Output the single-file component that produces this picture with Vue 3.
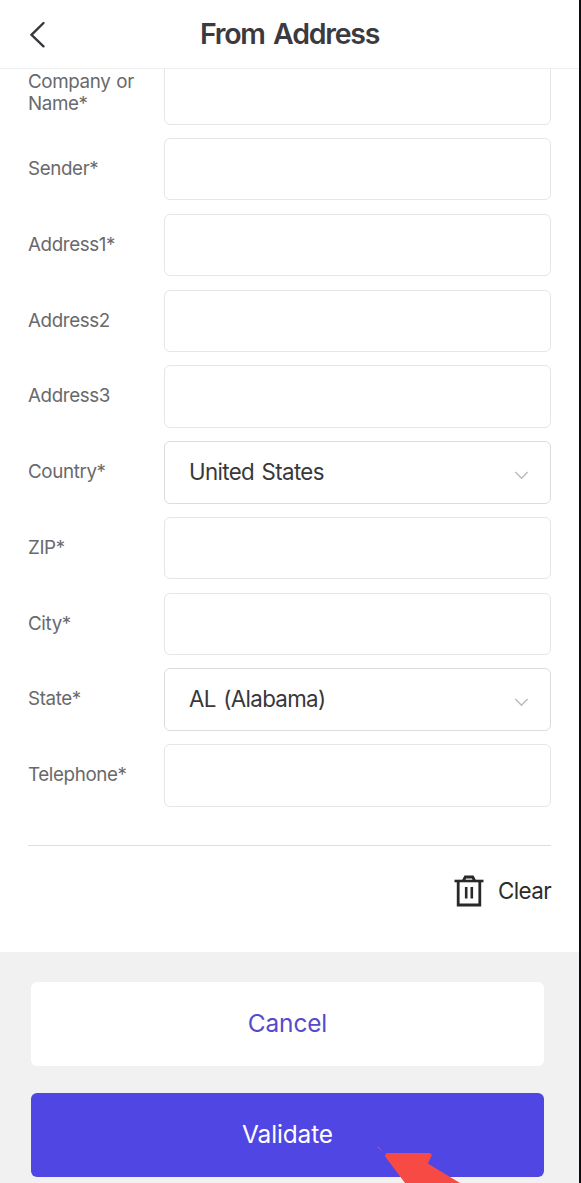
<style>
body {
  margin: 0;
  overflow: hidden;
}
</style>
<style scoped>
.page {
  display: flex;
  flex-direction: column;
  height: 1183px;
  overflow: hidden;
  box-sizing: border-box;
  border-right: 2px solid #0d0d0f;
  background: #fff;
  font-family: Inter, 'Liberation Sans', sans-serif;
  font-weight: 380;
  color: #333336;
}
.header {
  position: relative;
  z-index: 1;
  display: grid;
  grid-template-columns: 76px 1fr 76px;
  align-items: center;
  flex: 0 0 68px;
  background: #fff;
  border-bottom: 1px solid #eeeeef;
}
h1 {
  margin: 0;
  text-align: center;
  font-size: 28.5px;
  font-weight: 560;
  letter-spacing: -1.25px;
  word-spacing: 2.5px;
  line-height: 68px;
  color: #3b3a40;
}
button {
  padding: 0;
  border: 0;
  background: none;
  font-family: inherit;
  font-weight: inherit;
}
.back {
  display: flex;
  padding-left: 29px;
}
.form {
  flex: 0 0 883px;
  overflow: hidden;
  padding: 0 28px;
  box-sizing: border-box;
}
.fields {
  display: grid;
  grid-auto-rows: 62.4px;
  row-gap: 13.4px;
  margin-top: -6.8px;
}
.form-row {
  display: grid;
  grid-template-columns: 136px 1fr;
  align-items: center;
}
label {
  padding-bottom: 0.4px;
  font-size: 18.8px;
  letter-spacing: -0.38px;
  word-spacing: 1px;
  line-height: 22px;
  color: #69696b;
}
.form-field {
  position: relative;
  height: 100%;
}
input,
select {
  display: block;
  width: 100%;
  height: 100%;
  box-sizing: border-box;
  padding: 0 24px 2px;
  border: 1px solid #e6e6e6;
  border-radius: 6px;
  outline: none;
  background: #fff;
  font-family: inherit;
  font-size: 22.3px;
  font-weight: inherit;
  letter-spacing: -0.65px;
  word-spacing: 2px;
  color: #38383a;
}
select {
  appearance: none;
  border-color: #dcdcde;
}
.chevron {
  position: absolute;
  right: 22px;
  top: 29px;
  pointer-events: none;
}
.clear-row {
  display: flex;
  justify-content: flex-end;
  margin-top: 38px;
  padding-top: 27px;
  border-top: 1px solid #dedede;
}
.clear {
  display: flex;
  align-items: center;
  gap: 14px;
  height: 36px;
  font-size: 22.4px;
  letter-spacing: -0.6px;
  color: #2c2c2e;
}
.clear span {
  padding-bottom: 1px;
}
.actions {
  flex: 1;
  display: flex;
  flex-direction: column;
  gap: 27px;
  padding: 30px 35px 0 31px;
  background: #f1f1f1;
}
.action {
  flex: 0 0 84px;
  padding-bottom: 2px;
  border-radius: 6px;
  font-size: 24.4px;
  letter-spacing: -0.1px;
  background: #fff;
  color: #554bcb;
}
.action.primary {
  background: #5046e4;
  color: #fff;
}
.pointer {
  position: absolute;
  left: 376px;
  top: 1145px;
  z-index: 2;
}
</style>
<template>
  <div class="page">
    <header class="header">
      <button class="back" type="button" aria-label="Back">
        <svg width="18" height="28" viewBox="0 0 18 28" fill="none">
          <path d="M14.5 3L2.5 14.8L14.5 26.3" stroke="#38373c" stroke-width="2.4" stroke-linecap="round" />
        </svg>
      </button>
      <h1>From Address</h1>
    </header>

    <main class="form">
      <div class="fields">
        <div v-for="field in fields" :key="field.id" class="form-row">
          <label :for="field.id">{{ field.label }}</label>
          <div class="form-field">
            <template v-if="field.options">
              <select :id="field.id" v-model="form[field.id]">
                <option v-for="option in field.options" :key="option">{{ option }}</option>
              </select>
              <svg class="chevron" width="15" height="11" viewBox="0 0 15 11" fill="none">
                <path d="M1.4 2L7.5 8.3L13.6 2" stroke="#b9b9bb" stroke-width="1.4" />
              </svg>
            </template>
            <input v-else :id="field.id" v-model="form[field.id]" type="text" />
          </div>
        </div>
      </div>
      <div class="clear-row">
        <button class="clear" type="button" @click="clearForm">
          <svg width="30" height="32" viewBox="0 0 30 32" fill="none" stroke="#29292b">
            <path d="M0.5 6H29.5" stroke-width="2.6" />
            <path d="M9.5 5.5L11.3 2H18.7L20.5 5.5" stroke-width="2.8" />
            <path d="M4.2 6V30H25.8V6" stroke-width="2.8" />
            <path d="M12.2 12V23.5M17.8 12V23.5" stroke-width="2.6" />
          </svg>
          <span>Clear</span>
        </button>
      </div>
    </main>

    <footer class="actions">
      <button class="action" type="button">Cancel</button>
      <button class="action primary" type="button">Validate</button>
    </footer>

    <svg class="pointer" width="88" height="38" viewBox="0 0 88 38" fill="#f84a45">
      <path d="M1 1.5L3 2L6.5 6.8Z" />
      <path d="M11 8H53Q56 8 55.5 11L51.8 18.5L84 38H29L9.5 12Q8.5 9 11 8Z" />
    </svg>
  </div>
</template>

<script setup>
import { reactive } from 'vue'

const fields = [
  { id: 'company', label: 'Company or Name*' },
  { id: 'sender', label: 'Sender*' },
  { id: 'address1', label: 'Address1*' },
  { id: 'address2', label: 'Address2' },
  { id: 'address3', label: 'Address3' },
  { id: 'country', label: 'Country*', options: ['United States'] },
  { id: 'zip', label: 'ZIP*' },
  { id: 'city', label: 'City*' },
  { id: 'state', label: 'State*', options: ['AL (Alabama)'] },
  { id: 'telephone', label: 'Telephone*' },
]

const form = reactive({})

function clearForm() {
  fields.forEach((field) => {
    form[field.id] = field.options ? field.options[0] : ''
  })
}

clearForm()
</script>
